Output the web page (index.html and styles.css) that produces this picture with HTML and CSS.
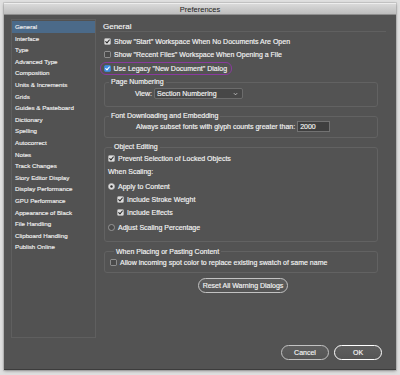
FILE: index.html
```html
<!DOCTYPE html>
<html>
<head>
<meta charset="utf-8">
<link rel="stylesheet" href="styles.css">
</head>
<body>
<div class="window">
  <div class="titlebar">Preferences</div>
  <div class="content">
    <div class="top">
      <ul class="sidebar">
        <li class="selected">General</li>
        <li>Interface</li>
        <li>Type</li>
        <li>Advanced Type</li>
        <li>Composition</li>
        <li>Units &amp; Increments</li>
        <li>Grids</li>
        <li>Guides &amp; Pasteboard</li>
        <li>Dictionary</li>
        <li>Spelling</li>
        <li>Autocorrect</li>
        <li>Notes</li>
        <li>Track Changes</li>
        <li>Story Editor Display</li>
        <li>Display Performance</li>
        <li>GPU Performance</li>
        <li>Appearance of Black</li>
        <li>File Handling</li>
        <li>Clipboard Handling</li>
        <li>Publish Online</li>
      </ul>
      <div class="main">
        <div class="heading">General</div>
        <div class="row top-row first">
          <svg class="cb on" viewBox="0 0 8 8"><rect x=".5" y=".5" width="7" height="7" rx="1.5"/><path d="M2 4.1 3.4 5.6 6.1 2.3"/></svg>
          <span>Show "Start" Workspace When No Documents Are Open</span>
        </div>
        <div class="row top-row">
          <svg class="cb off" viewBox="0 0 8 8"><rect x=".5" y=".5" width="7" height="7" rx="1.5"/></svg>
          <span>Show "Recent Files" Workspace When Opening a File</span>
        </div>
        <div class="row top-row highlight">
          <svg class="cb blue" viewBox="0 0 8 8"><rect x=".5" y=".5" width="7" height="7" rx="1.5"/><path d="M2 4.1 3.4 5.6 6.1 2.3"/></svg>
          <span>Use Legacy "New Document" Dialog</span>
        </div>

        <fieldset class="group g-page">
          <legend>Page Numbering</legend>
          <div class="row">
            <span class="view-label">View:</span>
            <div class="select">
              <span>Section Numbering</span>
              <svg class="chev" viewBox="0 0 6 4"><path d="M1 1 3 3 5 1"/></svg>
            </div>
          </div>
        </fieldset>

        <fieldset class="group g-font">
          <legend>Font Downloading and Embedding</legend>
          <div class="row">
            <span class="subset-label">Always subset fonts with glyph counts greater than:</span>
            <div class="input">2000</div>
          </div>
        </fieldset>

        <fieldset class="group g-obj">
          <legend>Object Editing</legend>
          <div class="row first">
            <svg class="cb on" viewBox="0 0 8 8"><rect x=".5" y=".5" width="7" height="7" rx="1.5"/><path d="M2 4.1 3.4 5.6 6.1 2.3"/></svg>
            <span>Prevent Selection of Locked Objects</span>
          </div>
          <div class="row label-row">When Scaling:</div>
          <div class="row gap-before">
            <svg class="rb on" viewBox="0 0 8 8"><circle cx="4" cy="4" r="3.5"/><circle class="dot" cx="4" cy="4" r="1.4"/></svg>
            <span>Apply to Content</span>
          </div>
          <div class="row indent">
            <svg class="cb on" viewBox="0 0 8 8"><rect x=".5" y=".5" width="7" height="7" rx="1.5"/><path d="M2 4.1 3.4 5.6 6.1 2.3"/></svg>
            <span>Include Stroke Weight</span>
          </div>
          <div class="row indent">
            <svg class="cb on" viewBox="0 0 8 8"><rect x=".5" y=".5" width="7" height="7" rx="1.5"/><path d="M2 4.1 3.4 5.6 6.1 2.3"/></svg>
            <span>Include Effects</span>
          </div>
          <div class="row gap-before">
            <svg class="rb off" viewBox="0 0 8 8"><circle cx="4" cy="4" r="3.5"/></svg>
            <span>Adjust Scaling Percentage</span>
          </div>
        </fieldset>

        <fieldset class="group g-place">
          <legend>When Placing or Pasting Content</legend>
          <div class="row">
            <svg class="cb off" viewBox="0 0 8 8"><rect x=".5" y=".5" width="7" height="7" rx="1.5"/></svg>
            <span>Allow incoming spot color to replace existing swatch of same name</span>
          </div>
        </fieldset>

        <div class="reset-wrap">
          <button class="btn reset">Reset All Warning Dialogs</button>
        </div>
      </div>
    </div>
    <div class="footer">
      <button class="btn">Cancel</button>
      <button class="btn primary">OK</button>
    </div>
  </div>
</div>
</body>
</html>
```
FILE: styles.css
```css
* { box-sizing: border-box; }
html, body { margin: 0; padding: 0; }
body {
  background: #e0e0e0;
  width: 400px;
  height: 375px;
  overflow: hidden;
  font-family: "Liberation Sans", Arial, sans-serif;
  padding-top: 3px;
  padding-left: 4px;
}
.window {
  width: 392px;
  height: 367px;
  background: #535353;
  box-shadow: 0 1px 3px rgba(0,0,0,0.35), 0 0 0 1px rgba(0,0,0,0.08);
  display: flex;
  flex-direction: column;
  border-bottom: 1px solid #3c3c3c;
}
.titlebar {
  height: 12px;
  line-height: 12px;
  background: linear-gradient(#d9d9d9, #bdbdbd);
  border-top: 1px solid #ededed;
  border-bottom: 1px solid #8e8e8e;
  text-align: center;
  font-size: 7.5px;
  color: #222;
  flex: none;
}
.content {
  flex: 1;
  padding: 4px 7px 0 7px;
  display: flex;
  flex-direction: column;
}
.top {
  display: flex;
  height: 319px;
}
.sidebar {
  list-style: none;
  margin: 0;
  padding: 1px 0 0 0;
  width: 85px;
  height: 319px;
  border: 1px solid #5f5f5f;
  background: #525252;
  flex: none;
}
.sidebar li {
  height: 11.6px;
  line-height: 11.6px;
  font-size: 6.2px;
  color: #efefef;
  padding-left: 3px;
  white-space: nowrap;
  -webkit-text-stroke: 0.15px #efefef;
}
.sidebar li.selected {
  background: #4b6a89;
}
.main {
  margin-left: 4px;
  width: 286px;
  color: #f4f4f4;
  font-size: 7px;
  -webkit-text-stroke: 0.15px #f4f4f4;
}
.heading {
  padding-top: 3px;
  height: 13px;
  line-height: 10px;
  font-size: 8px;
  padding-left: 3px;
  border-bottom: 1px solid #606060;
}
.row {
  display: flex;
  align-items: center;
  height: 13px;
  white-space: nowrap;
}
.top-row { padding-left: 4px; }
.top-row.first { margin-top: 2.5px; }
.row span { margin-left: 3px; }
.highlight {
  display: inline-flex;
  margin-top: 1px;
  border: 1.5px solid #8a3a9e;
  border-radius: 6px;
  padding-left: 2.5px;
  padding-right: 4px;
}
.cb, .rb {
  width: 7px;
  height: 7px;
  flex: none;
}
.cb rect { stroke-width: 0.8; }
.cb path { fill: none; stroke-width: 1.3; stroke-linecap: round; stroke-linejoin: round; }
.cb.on rect { fill: #dedede; stroke: #b5b5b5; }
.cb.on path { stroke: #2e2e2e; }
.cb.off rect { fill: #4a4a4a; stroke: #b0b0b0; }
.cb.blue rect { fill: #3f8fe6; stroke: #3f8fe6; }
.cb.blue path { stroke: #ffffff; }
.rb circle { stroke-width: 0.8; }
.rb.on circle { fill: #e2e2e2; stroke: #b5b5b5; }
.rb.on .dot { fill: #2e2e2e; stroke: none; }
.rb.off circle { fill: #4a4a4a; stroke: #b0b0b0; }

.group {
  margin: 2.5px 8px 0 4px;
  padding: 0;
  border: 1px solid #626262;
  border-radius: 3px;
  min-width: 0;
}
.group legend {
  font-size: 7px;
  line-height: 10px;
  padding: 0 2px;
  margin-left: 4px;
}
.g-page { padding-bottom: 6px; }
.view-label {
  width: 47px;
  text-align: right;
  margin-left: 0 !important;
}
.select {
  margin-left: 2px;
  width: 89px;
  height: 11px;
  background: #474747;
  border: 1px solid #6c6c6c;
  border-radius: 2px;
  display: flex;
  align-items: center;
  justify-content: space-between;
  padding-right: 4px;
}
.select span { margin-left: 2px; }
.chev { width: 5px; height: 4px; }
.chev path { fill: none; stroke: #cfcfcf; stroke-width: 1; }

.g-font { margin-top: 4px; padding-bottom: 5px; }
.g-font .row { height: 12px; margin-top: -1px; }
.subset-label { margin-left: 31px !important; }
.input {
  margin-left: 2px;
  width: 33px;
  height: 11px;
  line-height: 9px;
  background: #3f3f3f;
  border: 1px solid #727272;
  padding-left: 2px;
}

.g-obj { margin-top: 4px; padding: 0 0 7px 3px; }
.g-obj .row.first { margin-top: -0.5px; }
.label-row { padding-left: 0; }
.gap-before { margin-top: 2px; }
.indent { padding-left: 9px; }

.g-place { margin-top: 5px; padding: 0 0 3px 5px; }
.g-place .row { height: 12px; }

.reset-wrap {
  display: flex;
  justify-content: center;
  margin-top: 5px;
}
.btn {
  font-family: "Liberation Sans", Arial, sans-serif;
  font-size: 7px;
  color: #f4f4f4;
  -webkit-text-stroke: 0.15px #f4f4f4;
  height: 15px;
  padding: 0;
  border: 1px solid #c2c2c2;
  border-radius: 8px;
  background: linear-gradient(#5e5e5e, #555555);
}
.reset { width: 90px; }
.footer {
  display: flex;
  justify-content: flex-end;
  gap: 5px;
  padding-top: 7px;
  padding-right: 7px;
}
.footer .btn { width: 48px; height: 15px; }
.footer .primary { border: 1.5px solid #ffffff; }
```
